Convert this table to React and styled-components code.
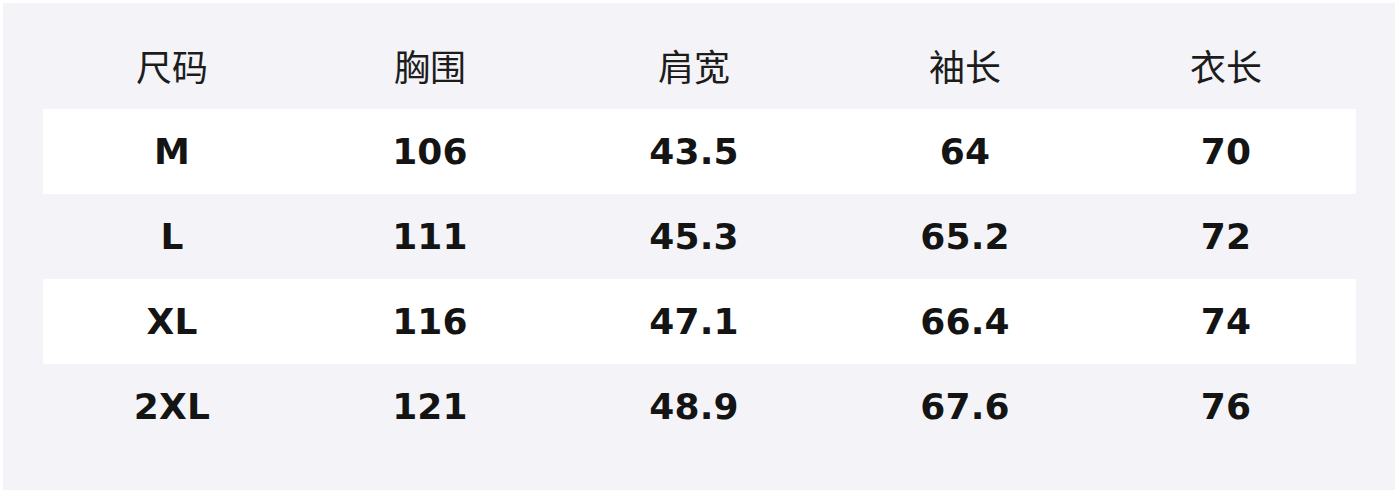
import React from 'react';
import styled, { createGlobalStyle } from 'styled-components';

const GlobalStyle = createGlobalStyle`
  html, body {
    margin: 0;
    padding: 0;
    background: #ffffff;
  }
`;

const Panel = styled.div`
  box-sizing: border-box;
  width: 1392px;
  height: 487px;
  margin: 3px 3px 3px 3px;
  padding: 21px 39px 0 40px;
  background: #f4f4f8;
  font-family: 'DejaVu Sans', 'Noto Sans CJK SC', sans-serif;
  color: #141414;
`;

const Row = styled.div`
  display: grid;
  grid-template-columns: 258px 258px 270px 272px 250px;
  height: 85px;
  align-items: center;
  background: ${props => (props.striped ? '#ffffff' : 'transparent')};
`;

const HeadCell = styled.div`
  text-align: center;
  font-family: 'Noto Sans CJK SC', sans-serif;
  font-weight: 400;
  font-size: 36px;
  line-height: 1;
  color: #1c1c1c;
  padding-bottom: 4px;
`;

const Cell = styled.div`
  text-align: center;
  font-family: 'DejaVu Sans', sans-serif;
  font-weight: 700;
  font-size: 36px;
  line-height: 1;
  letter-spacing: 0.2px;
  padding-top: 1px;
`;

const headers = ['尺码', '胸围', '肩宽', '袖长', '衣长'];

const rows = [
  ['M', '106', '43.5', '64', '70'],
  ['L', '111', '45.3', '65.2', '72'],
  ['XL', '116', '47.1', '66.4', '74'],
  ['2XL', '121', '48.9', '67.6', '76'],
];

const App = () => {
  return (
    <>
      <GlobalStyle />
      <Panel>
        <Row>
          {headers.map(h => (
            <HeadCell key={h}>{h}</HeadCell>
          ))}
        </Row>
        {rows.map((row, i) => (
          <Row key={row[0]} striped={i % 2 === 0}>
            {row.map((v, j) => (
              <Cell key={j}>{v}</Cell>
            ))}
          </Row>
        ))}
      </Panel>
    </>
  );
};

export default App;
